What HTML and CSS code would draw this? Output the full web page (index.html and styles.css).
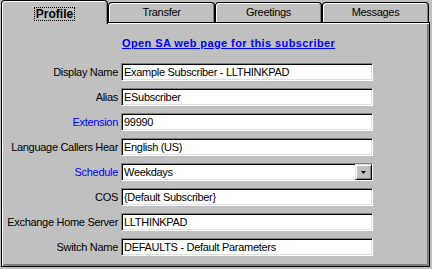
FILE: index.html
```html
<!DOCTYPE html>
<html lang="en">
<head>
    <meta charset="UTF-8">
    <meta name="viewport" content="width=device-width, initial-scale=1.0">
    <title>Subscriber Properties</title>
    <link rel="stylesheet" href="styles.css">
</head>
<body>
    <div class="dialog">
        <div class="tabs">
            <div class="tab active"><span class="focus">Profile</span></div>
            <div class="tab">Transfer</div>
            <div class="tab">Greetings</div>
            <div class="tab">Messages</div>
        </div>
        <div class="panel">
            <div class="link-row"><a href="#">Open SA web page for this subscriber</a></div>
            <div class="form">
                <label>Display Name</label>
                <input class="field" type="text" value="Example Subscriber - LLTHINKPAD" readonly>
                <label>Alias</label>
                <input class="field" type="text" value="ESubscriber" readonly>
                <label class="blue">Extension</label>
                <input class="field" type="text" value="99990" readonly>
                <label>Language Callers Hear</label>
                <input class="field" type="text" value="English (US)" readonly>
                <label class="blue">Schedule</label>
                <div class="field combo">
                    <span>Weekdays</span>
                    <span class="drop">
                        <svg width="5" height="3" viewBox="0 0 5 3"><polygon points="0,0 5,0 2.5,3" fill="#000"/></svg>
                    </span>
                </div>
                <label>COS</label>
                <input class="field" type="text" value="{Default Subscriber}" readonly>
                <label>Exchange Home Server</label>
                <input class="field" type="text" value="LLTHINKPAD" readonly>
                <label>Switch Name</label>
                <input class="field" type="text" value="DEFAULTS - Default Parameters" readonly>
            </div>
        </div>
    </div>
</body>
</html>
```

FILE: styles.css
```css
body {
    margin: 0;
    background-color: #c0c0c0;
    font-family: "Liberation Sans", Arial, sans-serif;
    font-size: 11px;
    letter-spacing: -0.3px;
    color: #000;
}
.dialog {
    width: 429px;
    padding-left: 1px;
}
.tabs {
    display: flex;
    align-items: flex-end;
    height: 22px;
}
.tab {
    box-sizing: border-box;
    width: 107px;
    height: 20px;
    border: 1px solid #000;
    border-bottom: 0;
    border-radius: 4px 4px 0 0;
    box-shadow: inset 1px 1px #fff, inset -1px 0 #808080;
    text-align: center;
    line-height: 19px;
}
.tab.active {
    position: relative;
    z-index: 1;
    height: 24px;
    margin-bottom: -2px;
    padding-top: 6px;
    line-height: normal;
    background-color: #c0c0c0;
}
.focus {
    display: inline-block;
    padding: 0 1px;
    border: 1px dotted #000;
    font-size: 12px;
    font-weight: bold;
    letter-spacing: 0;
    line-height: 12px;
}
.panel {
    box-sizing: border-box;
    width: 429px;
    height: 245px;
    padding-top: 14px;
    border: 1px solid #000;
    box-shadow: inset 1px 1px #fff, inset -2px -2px #808080;
}
.link-row {
    height: 13px;
    margin-bottom: 13px;
    padding-left: 120px;
    line-height: 13px;
}
.link-row a {
    color: #0000ff;
    font-weight: bold;
    letter-spacing: 0.4px;
    text-decoration: underline;
}
.form {
    display: grid;
    grid-template-columns: 116px 252px;
    grid-auto-rows: 18px;
    column-gap: 3px;
    row-gap: 7px;
}
.form label {
    text-align: right;
    line-height: 18px;
    white-space: nowrap;
}
.blue {
    color: #0000ff;
}
.field {
    box-sizing: border-box;
    width: 252px;
    height: 18px;
    margin: 0;
    padding: 0 0 0 2px;
    border: 1px solid;
    border-color: #808080 #fff #fff #808080;
    box-shadow: inset 1px 1px #000, inset -1px -1px #dfdfdf;
    background-color: #fff;
    font-family: "Liberation Sans", Arial, sans-serif;
    font-size: 11px;
    letter-spacing: -0.3px;
    color: #000;
    outline: none;
}
.combo {
    display: flex;
    align-items: center;
    justify-content: space-between;
    padding-right: 0;
}
.drop {
    box-sizing: border-box;
    display: flex;
    align-items: center;
    justify-content: center;
    width: 17px;
    height: 16px;
    border: 1px solid;
    border-color: #dfdfdf #000 #000 #dfdfdf;
    box-shadow: inset 1px 1px #fff, inset -1px -1px #808080;
    background-color: #c0c0c0;
}
.drop svg {
    display: block;
}
```
